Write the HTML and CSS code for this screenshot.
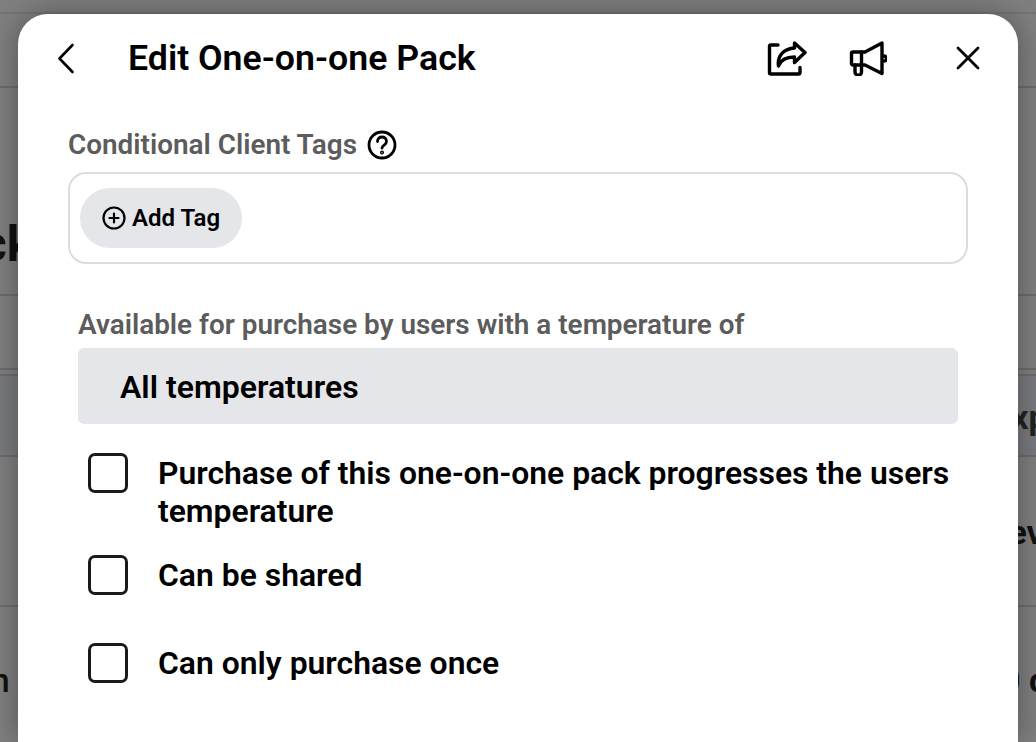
FILE: index.html
```html
<!DOCTYPE html>
<html lang="en">

<head>
    <meta charset="UTF-8">
    <meta name="viewport" content="width=device-width, initial-scale=1.0">
    <title>Edit One-on-one Pack</title>
    <link rel="stylesheet" href="styles.css">
</head>

<body>
    <!-- dimmed page behind the modal -->
    <div class="backdrop">
        <div class="bg-row bg-row-top"></div>
        <div class="bg-row bg-row-nav"></div>
        <div class="bg-row bg-row-tall"></div>
        <div class="bg-row bg-row-mid"></div>
        <div class="bg-row bg-row-gap"></div>
        <div class="bg-row bg-row-thead"></div>
        <div class="bg-row bg-row-body"></div>
        <div class="bg-row bg-row-last"></div>
        <span class="bg-text bg-text-heading">Pack</span>
        <span class="bg-text bg-text-exp">Expiration</span>
        <span class="bg-text bg-text-level">Level</span>
        <span class="bg-text bg-text-plan">Plan</span>
        <span class="bg-text bg-text-days">0 days</span>
    </div>

    <div class="modal">
        <div class="modal-header">
            <button class="icon-btn back-btn" aria-label="Back">
                <svg width="24" height="32" viewBox="0 0 24 32" fill="none" stroke="#000" stroke-width="2.600" stroke-linecap="round" stroke-linejoin="round">
                    <path d="M18.500 3 L5.500 16.500 L18.500 30"/>
                </svg>
            </button>
            <h1 class="modal-title">Edit One-on-one Pack</h1>
            <button class="icon-btn share-btn" aria-label="Share">
                <svg width="40" height="36" viewBox="0 0 40 36" fill="none" stroke="#000" stroke-width="3.400" stroke-linecap="round" stroke-linejoin="round">
                    <path d="M11 5 H4 A1.500 1.500 0 0 0 2.500 6.500 V32.500 A1.500 1.500 0 0 0 4 34 H31.500 A1.500 1.500 0 0 0 33 32.500 V27.500"/>
                    <path d="M27.500 3 L38 12.500 L27.500 22.500 V17 C21 17 14 19 11.500 26 C10 16 17 8.500 27.500 8 Z"/>
                </svg>
            </button>
            <button class="icon-btn promo-btn" aria-label="Promote">
                <svg width="38" height="36" viewBox="0 0 38 36" fill="none" stroke="#000" stroke-width="3.400" stroke-linecap="round" stroke-linejoin="round">
                    <path d="M33 3 L16 12 H4 A1.500 1.500 0 0 0 2.500 13.500 V23.500 A1.500 1.500 0 0 0 4 25 H16 L33 33.500 Z"/>
                    <path d="M12.500 12 V25"/>
                    <path d="M6 25 V32 A3.200 3.200 0 0 0 12.500 32 V25"/>
                    <path d="M35 16 A2.500 2.500 0 0 1 35 21"/>
                </svg>
            </button>
            <button class="icon-btn close-btn" aria-label="Close">
                <svg width="24" height="24" viewBox="0 0 24 24" fill="none" stroke="#000" stroke-width="2.800" stroke-linecap="round">
                    <path d="M2 2 L22 22 M22 2 L2 22"/>
                </svg>
            </button>
        </div>

        <div class="field-label tags-label">
            <span>Conditional Client Tags</span>
            <svg class="help-icon" width="30" height="30" viewBox="0 0 30 30" fill="none" stroke="#000" stroke-width="2.800" stroke-linecap="round">
                <circle cx="15" cy="15" r="13"/>
                <path d="M10.500 11.500 C10.500 5.500 19.500 5.500 19.500 11.500 C19.500 15 15 15 15 18"/>
                <circle cx="15" cy="22.500" r=".6" fill="#000"/>
            </svg>
        </div>
        <div class="tags-box">
            <button class="tag-btn">
                <svg width="24" height="24" viewBox="0 0 24 24" fill="none" stroke="#000" stroke-width="2.200" stroke-linecap="round">
                    <circle cx="12" cy="12" r="10.500"/>
                    <path d="M12 7.500 V16.500 M7.500 12 H16.500"/>
                </svg>
                Add Tag
            </button>
        </div>

        <div class="field-label temp-label">Available for purchase by users with a temperature of</div>
        <div class="temp-select">All temperatures</div>

        <ul class="check-list">
            <li class="check-row check-row-first"><span class="checkbox"></span><span class="check-text">Purchase of this one-on-one pack progresses the users temperature</span></li>
            <li class="check-row check-row-second"><span class="checkbox"></span><span class="check-text">Can be shared</span></li>
            <li class="check-row check-row-third"><span class="checkbox"></span><span class="check-text">Can only purchase once</span></li>
        </ul>
    </div>
</body>

</html>
```

FILE: styles.css
```css
* {
    box-sizing: border-box;
}

html,
body {
    margin: 0;
    height: 100%;
}

body {
    width: 1036px;
    height: 742px;
    overflow: hidden;
    position: relative;
    font-family: Roboto, "Liberation Sans", sans-serif;
    color: #000;
    background: #7f7f7f;
}

button {
    font-family: inherit;
    border: none;
    background: none;
    padding: 0;
    color: inherit;
}

/* page behind the modal */
.backdrop {
    position: absolute;
    top: 0;
    left: 0;
    right: 0;
    bottom: 0;
    display: flex;
    flex-direction: column;
    overflow: hidden;
    background: #7f7f7f;
}

.bg-row {
    flex: none;
    border-bottom: 2px solid #6c6c6c;
}

.bg-row-top {
    height: 14px;
    border-bottom-color: #747474;
}

.bg-row-nav {
    height: 74px;
}

.bg-row-tall {
    height: 208px;
}

.bg-row-mid {
    height: 74px;
}

.bg-row-gap {
    height: 6px;
}

.bg-row-thead {
    height: 81px;
    background: #787a7d;
}

.bg-row-body {
    height: 150px;
}

.bg-row-last {
    height: 137px;
    border-bottom: none;
}

.bg-text {
    position: absolute;
    white-space: nowrap;
    font-size: 34px;
    font-weight: 700;
    color: #111;
}

.bg-text-heading {
    left: -78px;
    top: 215px;
    font-size: 50px;
}

.bg-text-exp {
    left: 992px;
    top: 397px;
    color: #222;
}

.bg-text-level {
    left: 990px;
    top: 512px;
}

.bg-text-plan {
    left: -58px;
    top: 660px;
    font-weight: 500;
}

.bg-text-days {
    left: 1001px;
    top: 660px;
}

/* modal */
.modal {
    position: absolute;
    top: 14px;
    left: 18px;
    width: 1000px;
    height: 728px;
    background: #fff;
    border-radius: 30px 30px 0 0;
    padding: 0 50px;
    box-shadow: 0 0 30px rgba(0, 0, 0, .35);
}

.modal-header {
    display: flex;
    align-items: center;
    height: 88px;
}

.icon-btn {
    display: flex;
    align-items: center;
    justify-content: center;
    flex: none;
}

.back-btn {
    width: 24px;
    margin-left: -14px;
}

.modal-title {
    margin: 0 0 1px 50px;
    flex: 1;
    font-size: 35.700px;
    font-weight: 600;
    line-height: 44px;
}

.share-btn {
    margin-right: 42px;
}

.promo-btn {
    margin-right: 69px;
}

.close-btn {
    margin-right: -12px;
}

.field-label {
    color: #5c5c5c;
    font-size: 27.900px;
    font-weight: 600;
    line-height: 36px;
}

.tags-label {
    display: flex;
    align-items: center;
    gap: 10px;
    margin-top: 25px;
    height: 36px;
}

.tags-box {
    margin-top: 9px;
    height: 92px;
    border: 2px solid #dcdcde;
    border-radius: 18px;
    padding: 14px 10px;
}

.tag-btn {
    display: flex;
    align-items: center;
    gap: 6px;
    height: 60px;
    width: 162px;
    padding-left: 22px;
    border-radius: 30px;
    background: #e5e6ea;
    font-size: 24px;
    font-weight: 600;
}

.temp-label {
    margin: 43px 0 0 10px;
}

.temp-select {
    margin: 5px 10px 0;
    height: 76px;
    border-radius: 6px;
    background: #e5e6ea;
    padding-left: 42px;
    font-size: 32px;
    font-weight: 600;
    line-height: 78px;
}

.check-list {
    list-style: none;
    margin: 0;
    padding: 0 10px 0 20px;
}

.check-row {
    display: flex;
    gap: 30px;
    font-size: 31.900px;
    font-weight: 600;
    line-height: 38px;
}

.check-text {
    padding-top: 1px;
}

.checkbox {
    flex: none;
    width: 40px;
    height: 40px;
    border: 3px solid #1a1a1a;
    border-radius: 7px;
}

.check-row-first {
    margin-top: 29px;
}

.check-row-second {
    margin-top: 25px;
}

.check-row-third {
    margin-top: 48px;
}
```
